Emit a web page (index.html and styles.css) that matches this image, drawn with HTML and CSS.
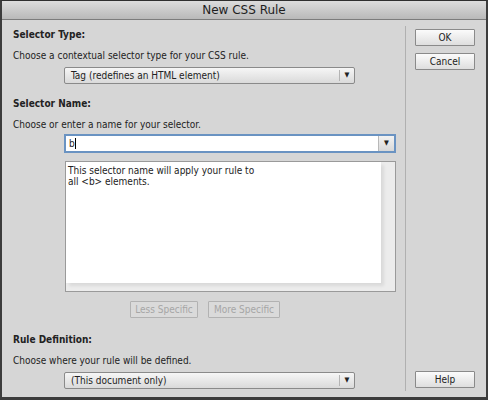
FILE: index.html
```html
<!DOCTYPE html>
<html lang="en">
<head>
  <meta charset="UTF-8">
  <title>New CSS Rule</title>
  <link rel="stylesheet" href="styles.css">
</head>
<body>
  <div class="window">
    <div class="titlebar">New CSS Rule</div>
    <div class="content">
      <div class="main">
        <div class="heading first">Selector Type:</div>
        <div class="hint">Choose a contextual selector type for your CSS rule.</div>
        <div class="select">
          <span class="select-text">Tag (redefines an HTML element)</span>
          <span class="select-arrow">&#9660;</span>
        </div>

        <div class="heading">Selector Name:</div>
        <div class="hint">Choose or enter a name for your selector.</div>
        <div class="combo">
          <span class="combo-text">b<span class="caret"></span></span>
          <span class="combo-arrow">&#9660;</span>
        </div>

        <div class="info">
          <div class="info-inner">This selector name will apply your rule to<br>all &lt;b&gt; elements.</div>
        </div>

        <div class="specific">
          <button class="btn disabled less">Less Specific</button>
          <button class="btn disabled more">More Specific</button>
        </div>

        <div class="heading last">Rule Definition:</div>
        <div class="hint">Choose where your rule will be defined.</div>
        <div class="select">
          <span class="select-text">(This document only)</span>
          <span class="select-arrow">&#9660;</span>
        </div>
      </div>
      <div class="side">
        <button class="btn ok">OK</button>
        <button class="btn cancel">Cancel</button>
        <div class="spacer"></div>
        <button class="btn help">Help</button>
      </div>
    </div>
  </div>
</body>
</html>
```

FILE: styles.css
```css
body {
  margin: 0;
  padding: 0;
  font-family: "DejaVu Sans Condensed", "DejaVu Sans", sans-serif;
  font-size: 10px;
  color: #222;
  background: #d6d6d6;
}
.window {
  width: 488px;
  height: 400px;
  box-sizing: border-box;
  border: 2px solid #3c3c3c;
  border-top: 1px solid #2e2e2e;
  border-bottom: 3px solid #3c3c3c;
  background-color: #d6d6d6;
  display: flex;
  flex-direction: column;
}
.titlebar {
  height: 18px;
  line-height: 18px;
  text-align: center;
  font-family: "DejaVu Sans", sans-serif;
  font-size: 12px;
  color: #1e1e1e;
  background: linear-gradient(#dcdcdc, #b9b9b9);
  border-bottom: 1px solid #7c7c7c;
}
.content {
  flex: 1;
  display: flex;
}
.main {
  width: 392px;
  padding: 8px 0 0 11px;
}
.heading {
  font-weight: bold;
  line-height: 14px;
  margin-top: 13px;
}
.heading.first {
  margin-top: 0;
}
.heading.last {
  margin-top: 15px;
}
.hint {
  line-height: 14px;
  margin-top: 7px;
}
.select {
  margin: 4px 0 0 51px;
  width: 291px;
  height: 17px;
  box-sizing: border-box;
  border: 1px solid #8a8a8a;
  border-radius: 2px;
  background: linear-gradient(#f6f6f6, #dadada);
  display: flex;
  align-items: center;
}
.select-text {
  flex: 1;
  padding-left: 6px;
}
.select-arrow {
  width: 14px;
  border-left: 1px solid #b4b4b4;
  font-size: 7px;
  text-align: center;
  line-height: 11px;
  color: #222;
}
.combo {
  margin: 2px 0 0 51px;
  width: 332px;
  height: 19px;
  box-sizing: border-box;
  border: 2px solid #6a93c2;
  background: #fff;
  display: flex;
  align-items: center;
}
.combo-text {
  flex: 1;
  padding-left: 3px;
}
.caret {
  display: inline-block;
  width: 1px;
  height: 11px;
  background: #000;
  vertical-align: -2px;
}
.combo-arrow {
  width: 15px;
  height: 100%;
  background: linear-gradient(#f2f2f2, #d8d8d8);
  border-left: 1px solid #b8b8b8;
  font-size: 7px;
  text-align: center;
  line-height: 15px;
}
.info {
  margin: 8px 0 0 52px;
  width: 331px;
  height: 131px;
  box-sizing: border-box;
  border: 1px solid #9a9a9a;
  background: #fff;
  padding: 0 14px 11px 0;
  box-shadow: inset -14px -11px 0 #ececec;
}
.info-inner {
  height: 100%;
  background: #fff;
  padding: 3px 0 0 2px;
  line-height: 11px;
  box-shadow: 3px 3px 3px rgba(0, 0, 0, 0.08);
}
.specific {
  margin: 9px 0 0 117px;
  display: flex;
  gap: 10px;
}
.btn {
  font-family: "DejaVu Sans Condensed", "DejaVu Sans", sans-serif;
  font-size: 10px;
  color: #222;
  height: 17px;
  padding: 0;
  border: 1px solid #8a8a8a;
  border-radius: 1px;
  background: linear-gradient(#fbfbfb, #dedede);
}
.btn.disabled {
  color: #a6a6a6;
  border-color: #b2b2b2;
  background: #dadada;
}
.less {
  width: 68px;
}
.more {
  width: 72px;
}
.side {
  flex: 1;
  margin: 6px 0 6px 0;
  border-left: 1px solid #b0b0b0;
  display: flex;
  flex-direction: column;
  padding: 3px 0 3px 9px;
}
.side .btn {
  width: 60px;
}
.cancel {
  margin-top: 7px;
}
.spacer {
  flex: 1;
}
```
